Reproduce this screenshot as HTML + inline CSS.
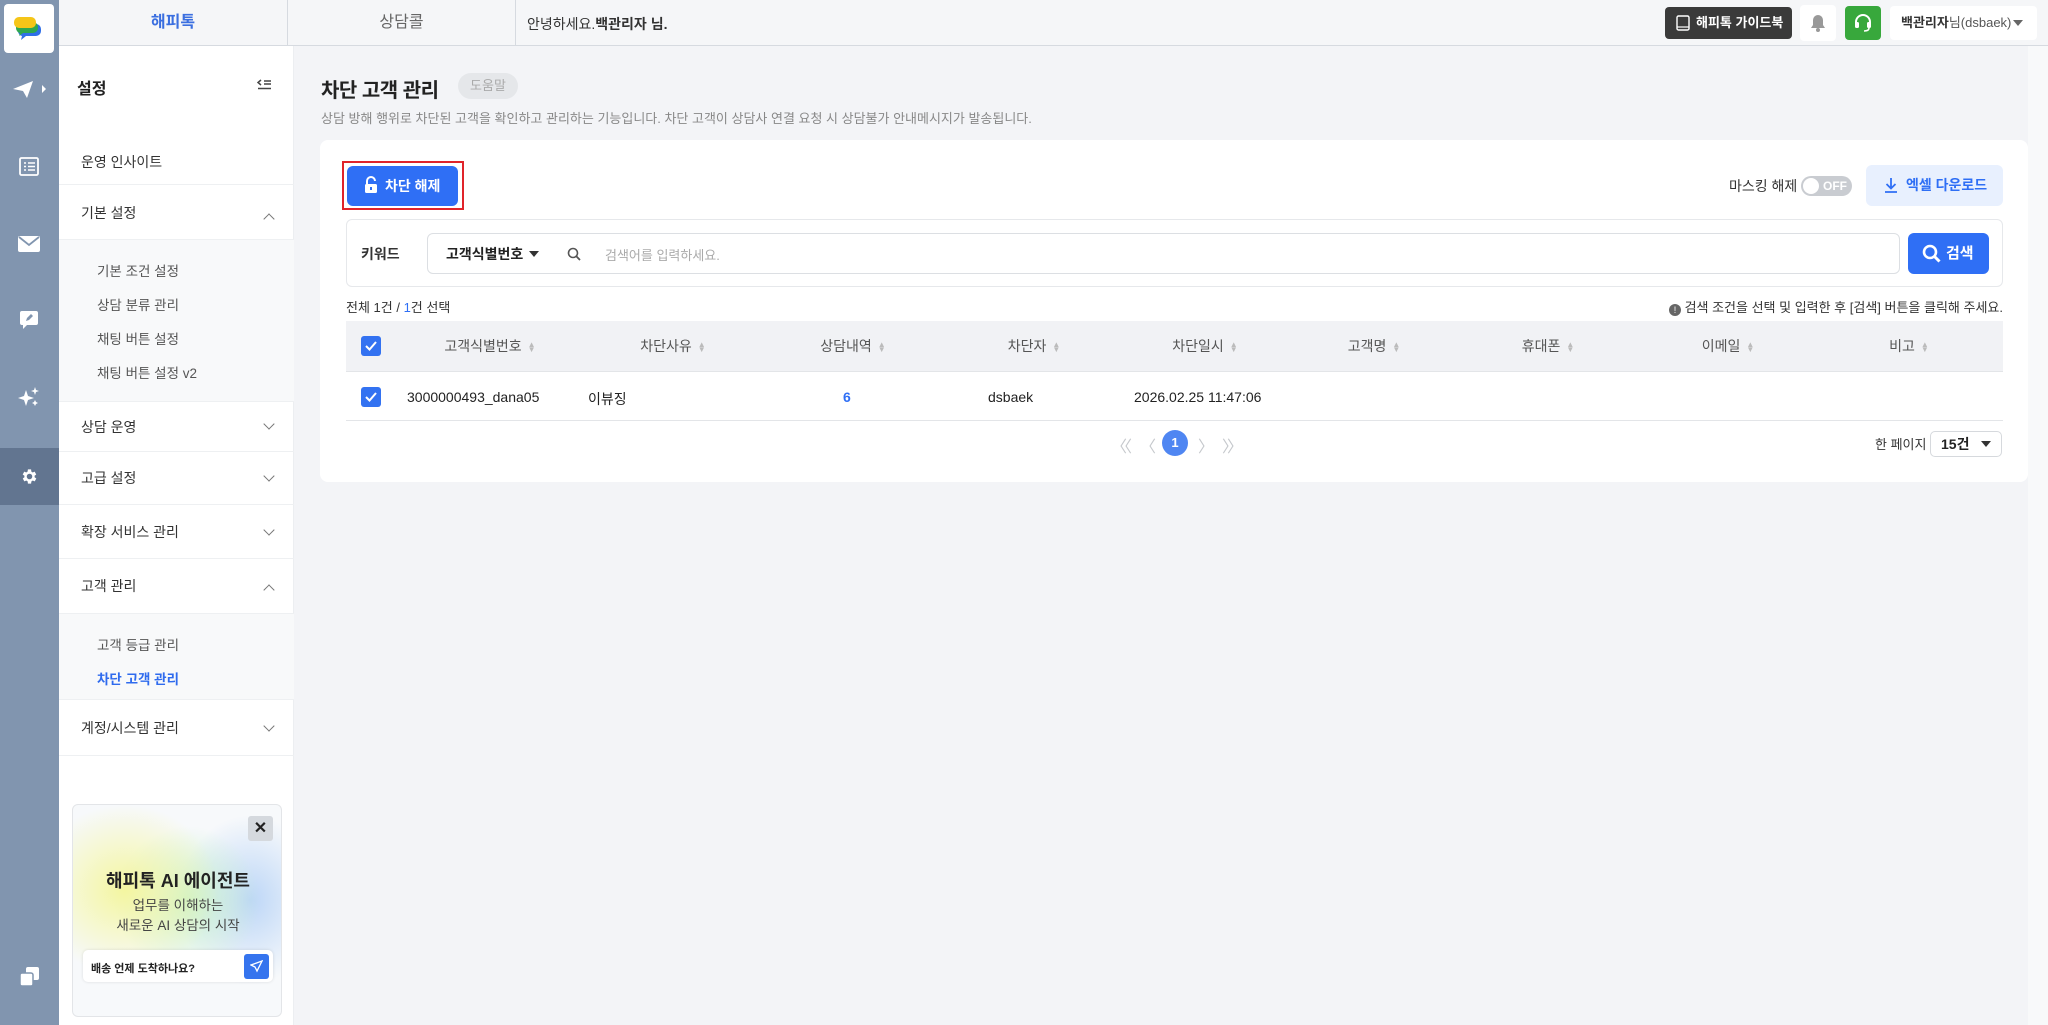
<!DOCTYPE html>
<html><head><meta charset="utf-8">
<style>
*{box-sizing:border-box;margin:0;padding:0}
body{width:2048px;height:1025px;overflow:hidden;background:#f3f4f7;font-family:"Liberation Sans","Noto Sans CJK KR",sans-serif;color:#222;position:relative}
.a{position:absolute}
.rail{left:0;top:0;width:59px;height:1025px;background:#8195af}
.top{left:59px;top:0;width:1989px;height:46px;background:#f5f6f8;border-bottom:1px solid #d6dae0}
.tab{top:0;height:45px;line-height:45px;text-align:center;font-size:16px;color:#666;border-right:1px solid #d6dae0}
.side{left:59px;top:46px;width:235px;height:979px;background:#fff;border-right:1px solid #eceef1}
.mi{left:0;width:235px;font-size:14px;color:#333;padding-left:22px;border-bottom:1px solid #eef0f2}
.sub{left:0;width:235px;background:#f8f9fa}
.si{left:38px;font-size:13.5px;color:#555}
.chev{right:20px;width:8px;height:8px;border-right:1.6px solid #777;border-bottom:1.6px solid #777}
.th{top:321px;height:51px;line-height:51px;font-size:14px;color:#555;transform:translateX(-50%);white-space:nowrap}
.sort{display:inline-block;margin-left:6px;vertical-align:middle;color:#bbb;font-size:8px;line-height:5px}
.cb{width:20px;height:20px;background:#3372f1;border-radius:3px}
.td{top:389px;font-size:14px;color:#222;white-space:nowrap}
</style></head><body>

<div class="a rail"></div>
<div class="a" style="left:4px;top:4px;width:50px;height:49px;background:#fff;border-radius:4px"></div>
<svg class="a" style="left:14px;top:16px" width="30" height="26" viewBox="0 0 30 26">
<path d="M6 8h16a5 5 0 0 1 5 5v2a5 5 0 0 1-5 5H12l-5 4 1-4a5 5 0 0 1-4-5v-2a5 5 0 0 1 2-5z" fill="#2f6fe8"/>
<path d="M4 6h15a5 5 0 0 1 5 5v1a5 5 0 0 1-5 5H9l-4 3 1-3a5 5 0 0 1-4-5v-1a5 5 0 0 1 2-5z" fill="#2fa84f"/>
<path d="M5 1h12a5 5 0 0 1 5 5v1a5 5 0 0 1-5 5H5a5 5 0 0 1-5-5V6a5 5 0 0 1 5-5z" fill="#f5c518"/>
</svg>
<svg class="a" style="left:11px;top:79px" width="38" height="20" viewBox="0 0 38 20"><path d="M2 10L22 2 16 19 12 12z" fill="#fff"/><path d="M31 6l4 4-4 4z" fill="#fff"/></svg>
<svg class="a" style="left:19px;top:157px" width="20" height="19" viewBox="0 0 20 19"><rect x="1" y="1" width="18" height="17" rx="1.5" fill="none" stroke="#fff" stroke-width="1.8"/><path d="M5 6h2M9 6h7M5 9.5h2M9 9.5h7M5 13h2M9 13h7" stroke="#fff" stroke-width="1.6"/></svg>
<svg class="a" style="left:18px;top:236px" width="22" height="16" viewBox="0 0 22 16"><rect x="0" y="0" width="22" height="16" rx="2" fill="#fff"/><path d="M1 1l10 8 10-8" fill="none" stroke="#8195af" stroke-width="1.8"/></svg>
<svg class="a" style="left:19px;top:310px" width="20" height="20" viewBox="0 0 20 20"><path d="M3 1h14a2 2 0 0 1 2 2v10a2 2 0 0 1-2 2H8l-4 4v-4H3a2 2 0 0 1-2-2V3a2 2 0 0 1 2-2z" fill="#fff"/><path d="M7 11l1-3 4-4 2 2-4 4z" fill="#8195af"/></svg>
<svg class="a" style="left:17px;top:386px" width="24" height="22" viewBox="0 0 24 22"><path d="M9 4l2 6 6 2-6 2-2 6-2-6-6-2 6-2z" fill="#fff"/><path d="M18 1l1 3 3 1-3 1-1 3-1-3-3-1 3-1z" fill="#fff"/><path d="M18 14l1 2 2 1-2 1-1 2-1-2-2-1 2-1z" fill="#fff"/></svg>
<div class="a" style="left:0;top:448px;width:59px;height:57px;background:#627590"></div>
<svg class="a" style="left:20px;top:467px" width="19" height="19" viewBox="0 0 24 24"><path fill="#fff" d="M19.4 13a7.5 7.5 0 0 0 0-2l2.1-1.6-2-3.5-2.5 1a7 7 0 0 0-1.7-1L15 3h-4l-.4 2.9a7 7 0 0 0-1.7 1l-2.5-1-2 3.5L6.6 11a7.5 7.5 0 0 0 0 2l-2.1 1.6 2 3.5 2.5-1a7 7 0 0 0 1.700 1L11 21h4l.4-2.9a7 7 0 0 0 1.7-1l2.5 1 2-3.5zM13 15.5a3.5 3.5 0 1 1 0-7 3.5 3.5 0 0 1 0 7z" transform="translate(-1 0)"/></svg>
<svg class="a" style="left:19px;top:966px" width="21" height="21" viewBox="0 0 21 21"><rect x="7" y="1" width="13" height="13" rx="2" fill="#fff"/><rect x="1" y="7" width="13" height="13" rx="2" fill="#fff" stroke="#8195af" stroke-width="1.5"/></svg>

<div class="a top"></div>
<div class="a tab" style="left:59px;width:229px;color:#3b6fe0;font-weight:bold">해피톡</div>
<div class="a tab" style="left:288px;width:228px">상담콜</div>
<div class="a" style="left:527px;top:14px;font-size:14px;color:#333">안녕하세요.<b>백관리자 님.</b></div>
<div class="a" style="left:1665px;top:7px;width:127px;height:32px;background:#3a3a3a;border-radius:4px;color:#fff;font-size:13px;font-weight:bold;line-height:32px;padding-left:31px">해피톡 가이드북</div>
<svg class="a" style="left:1676px;top:15px" width="14" height="16" viewBox="0 0 14 16"><rect x="1" y="1" width="12" height="14" rx="1.5" fill="none" stroke="#fff" stroke-width="1.4"/><path d="M1 12h12" stroke="#fff" stroke-width="1.2"/></svg>
<div class="a" style="left:1800px;top:5px;width:36px;height:36px;background:#fff;border-radius:4px"></div>
<svg class="a" style="left:1810px;top:14px" width="16" height="18" viewBox="0 0 16 18"><path d="M8 1a5 5 0 0 1 5 5v5l2 3H1l2-3V6a5 5 0 0 1 5-5z" fill="#999"/><circle cx="8" cy="16" r="2" fill="#999"/></svg>
<div class="a" style="left:1845px;top:6px;width:36px;height:34px;background:#38a83c;border-radius:4px"></div>
<svg class="a" style="left:1852px;top:12px" width="22" height="22" viewBox="0 0 22 22"><path d="M4 12V10a7 7 0 0 1 14 0v2" fill="none" stroke="#fff" stroke-width="2"/><rect x="3" y="10" width="4" height="6" rx="1.5" fill="#fff"/><rect x="15" y="10" width="4" height="6" rx="1.5" fill="#fff"/><path d="M17 16q0 3-5 3" fill="none" stroke="#fff" stroke-width="1.6"/></svg>
<div class="a" style="left:1890px;top:6px;width:147px;height:34px;background:#fff;border-radius:4px;font-size:13px;line-height:34px;padding-left:11px;color:#333"><b>백관리자</b><span style="color:#555">님(dsbaek)</span></div>
<div class="a" style="left:2013px;top:20px;border-left:5px solid transparent;border-right:5px solid transparent;border-top:6px solid #666"></div>

<div class="a side">
 <div class="a" style="left:18px;top:29px;font-size:16px;font-weight:bold">설정</div>
 <svg class="a" style="left:198px;top:33px" width="14" height="11" viewBox="0 0 14 11"><path d="M4 1L1 3.5 4 6" fill="none" stroke="#444" stroke-width="1.5"/><path d="M7 2h7M7 5h7M1 9.5h13" stroke="#444" stroke-width="1.5"/></svg>
 <div class="a mi" style="top:93px;height:46px;line-height:46px">운영 인사이트</div>
 <div class="a mi" style="top:140px;height:54px;line-height:54px">기본 설정</div>
 <div class="a chev" style="top:169px;transform:rotate(-135deg)"></div>
 <div class="a sub" style="top:194px;height:161px"></div>
 <div class="a si" style="top:214px">기본 조건 설정</div>
 <div class="a si" style="top:248px">상담 분류 관리</div>
 <div class="a si" style="top:282px">채팅 버튼 설정</div>
 <div class="a si" style="top:316px">채팅 버튼 설정 v2</div>
 <div class="a mi" style="top:355px;height:51px;line-height:51px;border-top:1px solid #eef0f2">상담 운영</div>
 <div class="a chev" style="top:374px;transform:rotate(45deg)"></div>
 <div class="a mi" style="top:406px;height:53px;line-height:53px">고급 설정</div>
 <div class="a chev" style="top:426px;transform:rotate(45deg)"></div>
 <div class="a mi" style="top:459px;height:54px;line-height:54px">확장 서비스 관리</div>
 <div class="a chev" style="top:480px;transform:rotate(45deg)"></div>
 <div class="a mi" style="top:513px;height:55px;line-height:55px">고객 관리</div>
 <div class="a chev" style="top:540px;transform:rotate(-135deg)"></div>
 <div class="a sub" style="top:568px;height:85px"></div>
 <div class="a si" style="top:588px">고객 등급 관리</div>
 <div class="a si" style="top:622px;color:#2f6bee;font-weight:bold">차단 고객 관리</div>
 <div class="a mi" style="top:653px;height:57px;line-height:57px;border-top:1px solid #eef0f2">계정/시스템 관리</div>
 <div class="a chev" style="top:676px;transform:rotate(45deg)"></div>
</div>
<div class="a" style="left:72px;top:804px;width:210px;height:213px;border:1px solid #e3e5e8;border-radius:6px;overflow:hidden;background:radial-gradient(ellipse 45% 40% at 25% 40%,#f4f6a0,transparent),radial-gradient(ellipse 35% 35% at 55% 45%,#c9f1cf,transparent),radial-gradient(ellipse 35% 40% at 85% 45%,#bcd6f7,transparent),#f7f9fb">
 <div class="a" style="left:175px;top:11px;width:25px;height:25px;background:#d5d9de;border-radius:3px;text-align:center;line-height:25px;font-size:16px;font-weight:bold">✕</div>
 <div class="a" style="left:0;width:210px;top:62px;text-align:center;font-size:18px;font-weight:bold">해피톡 AI 에이전트</div>
 <div class="a" style="left:0;width:210px;top:91px;text-align:center;font-size:13.5px;color:#444;line-height:20px">업무를 이해하는<br>새로운 AI 상담의 시작</div>
 <div class="a" style="left:10px;top:145px;width:190px;height:32px;background:#fff;border-radius:5px;box-shadow:0 0 3px rgba(0,0,0,.12)"></div>
 <div class="a" style="left:18px;top:155px;font-size:11px;font-weight:bold;color:#222">배송 언제 도착하나요?</div>
 <div class="a" style="left:171px;top:149px;width:25px;height:25px;background:#3574ee;border-radius:3px"></div>
 <svg class="a" style="left:177px;top:155px" width="13" height="13" viewBox="0 0 13 13"><path d="M12 1L1 5l4 2 2 4z" fill="none" stroke="#fff" stroke-width="1.3"/></svg>
</div>

<div class="a" style="left:321px;top:74px;font-size:20px;font-weight:bold;color:#222;letter-spacing:-0.5px">차단 고객 관리</div>
<div class="a" style="left:458px;top:73px;width:60px;height:26px;background:#e5e7ea;border-radius:13px;text-align:center;line-height:26px;font-size:13px;color:#aaa">도움말</div>
<div class="a" style="left:321px;top:108px;font-size:13px;color:#888">상담 방해 행위로 차단된 고객을 확인하고 관리하는 기능입니다. 차단 고객이 상담사 연결 요청 시 상담불가 안내메시지가 발송됩니다.</div>

<div class="a" style="left:320px;top:140px;width:1708px;height:342px;background:#fff;border-radius:8px"></div>
<div class="a" style="left:342px;top:161px;width:122px;height:49px;border:2px solid #e0242a"></div>
<div class="a" style="left:347px;top:166px;width:111px;height:40px;background:#2f6ff5;border-radius:6px;color:#fff;font-weight:bold;font-size:14px;line-height:40px;padding-left:38px">차단 해제</div>
<svg class="a" style="left:364px;top:176px" width="14" height="18" viewBox="0 0 14 18"><path d="M3 8V5a4 4 0 0 1 8 0" fill="none" stroke="#fff" stroke-width="2"/><rect x="1" y="8" width="12" height="9" rx="1.5" fill="#fff"/><rect x="6" y="11" width="2" height="3" fill="#2f6ff5"/></svg>

<div class="a" style="left:1729px;top:176px;font-size:14px;color:#333">마스킹 해제</div>
<div class="a" style="left:1801px;top:176px;width:51px;height:20px;background:#c9ccd1;border-radius:10px;color:#fff;font-size:12px;font-weight:bold;line-height:20px;padding-left:22px">OFF</div>
<div class="a" style="left:1803px;top:178px;width:16px;height:16px;background:#fff;border-radius:50%"></div>
<div class="a" style="left:1866px;top:165px;width:137px;height:41px;background:#e8f0fe;border-radius:6px;color:#2f6ff5;font-size:14px;font-weight:bold;line-height:41px;padding-left:40px">엑셀 다운로드</div>
<svg class="a" style="left:1884px;top:177px" width="14" height="16" viewBox="0 0 14 16"><path d="M7 1v10M2.5 7L7 11.5 11.5 7M1 15h12" fill="none" stroke="#2f6ff5" stroke-width="1.8"/></svg>

<div class="a" style="left:346px;top:219px;width:1657px;height:68px;border:1px solid #e6e8eb;border-radius:6px"></div>
<div class="a" style="left:361px;top:244px;font-size:14px;font-weight:bold;color:#333">키워드</div>
<div class="a" style="left:427px;top:233px;width:1473px;height:41px;border:1px solid #dcdfe3;border-radius:6px"></div>
<div class="a" style="left:446px;top:244px;font-size:14px;color:#222;font-weight:bold">고객식별번호</div>
<div class="a" style="left:529px;top:251px;border-left:5px solid transparent;border-right:5px solid transparent;border-top:6px solid #333"></div>
<svg class="a" style="left:567px;top:247px" width="14" height="14" viewBox="0 0 14 14"><circle cx="6" cy="6" r="4.5" fill="none" stroke="#555" stroke-width="1.6"/><path d="M9.3 9.3L13 13" stroke="#555" stroke-width="1.8"/></svg>
<div class="a" style="left:605px;top:245px;font-size:13px;color:#aaa">검색어를 입력하세요.</div>
<div class="a" style="left:1908px;top:233px;width:81px;height:41px;background:#2f6ff5;border-radius:6px;color:#fff;font-weight:bold;font-size:15px;line-height:41px;padding-left:38px">검색</div>
<svg class="a" style="left:1922px;top:244px" width="19" height="19" viewBox="0 0 19 19"><circle cx="8" cy="8" r="6" fill="none" stroke="#fff" stroke-width="2.6"/><path d="M12.5 12.5L17.5 17.5" stroke="#fff" stroke-width="3"/></svg>

<div class="a" style="left:346px;top:297px;font-size:13px;color:#333">전체 1건 / <span style="color:#2f6ff5">1</span>건 선택</div>
<div class="a" style="left:1665px;top:297px;font-size:13px;color:#333;width:338px;text-align:right"><span style="display:inline-block;width:12px;height:12px;border-radius:50%;background:#666;color:#fff;font-size:9px;line-height:12px;text-align:center;vertical-align:-1px">!</span> 검색 조건을 선택 및 입력한 후 [검색] 버튼을 클릭해 주세요.</div>

<div class="a" style="left:346px;top:321px;width:1657px;height:51px;background:#f1f2f5;border-bottom:1px solid #e3e5e8"></div>
<div class="a cb" style="left:361px;top:336px"></div>
<svg class="a" style="left:365px;top:341px" width="12" height="10" viewBox="0 0 12 10"><path d="M1 5l3.5 3.5L11 1" fill="none" stroke="#fff" stroke-width="2"/></svg>
<div class="a th" style="left:490px">고객식별번호<span class="sort">▲<br>▼</span></div>
<div class="a th" style="left:673px">차단사유<span class="sort">▲<br>▼</span></div>
<div class="a th" style="left:853px">상담내역<span class="sort">▲<br>▼</span></div>
<div class="a th" style="left:1034px">차단자<span class="sort">▲<br>▼</span></div>
<div class="a th" style="left:1205px">차단일시<span class="sort">▲<br>▼</span></div>
<div class="a th" style="left:1374px">고객명<span class="sort">▲<br>▼</span></div>
<div class="a th" style="left:1548px">휴대폰<span class="sort">▲<br>▼</span></div>
<div class="a th" style="left:1728px">이메일<span class="sort">▲<br>▼</span></div>
<div class="a th" style="left:1909px">비고<span class="sort">▲<br>▼</span></div>

<div class="a cb" style="left:361px;top:387px"></div>
<svg class="a" style="left:365px;top:392px" width="12" height="10" viewBox="0 0 12 10"><path d="M1 5l3.5 3.5L11 1" fill="none" stroke="#fff" stroke-width="2"/></svg>
<div class="a td" style="left:407px">3000000493_dana05</div>
<div class="a td" style="left:588px">이뷰징</div>
<div class="a td" style="left:843px;color:#2f6ff5;font-weight:bold">6</div>
<div class="a td" style="left:988px">dsbaek</div>
<div class="a td" style="left:1134px">2026.02.25 11:47:06</div>
<div class="a" style="left:346px;top:420px;width:1657px;height:1px;background:#e3e5e8"></div>

<div class="a" style="left:1111px;top:433px;font-size:16px;color:#c5c8cc;letter-spacing:-3px">〈〈</div>
<div class="a" style="left:1140px;top:433px;font-size:16px;color:#c5c8cc">〈</div>
<div class="a" style="left:1162px;top:430px;width:26px;height:26px;border-radius:50%;background:#4f86f2;color:#fff;font-size:13px;font-weight:bold;text-align:center;line-height:26px">1</div>
<div class="a" style="left:1198px;top:433px;font-size:16px;color:#c5c8cc">〉</div>
<div class="a" style="left:1222px;top:433px;font-size:16px;color:#c5c8cc;letter-spacing:-3px">〉〉</div>
<div class="a" style="left:1875px;top:434px;font-size:13px;color:#333">한 페이지</div>
<div class="a" style="left:1930px;top:431px;width:72px;height:26px;border:1px solid #d6d9dd;border-radius:5px;font-size:14px;font-weight:bold;line-height:24px;padding-left:10px">15건</div>
<div class="a" style="left:1981px;top:441px;border-left:5px solid transparent;border-right:5px solid transparent;border-top:6px solid #333"></div>
<div class="a" style="left:2028px;top:46px;width:20px;height:979px;background:#f8f9fa"></div>
</body></html>
